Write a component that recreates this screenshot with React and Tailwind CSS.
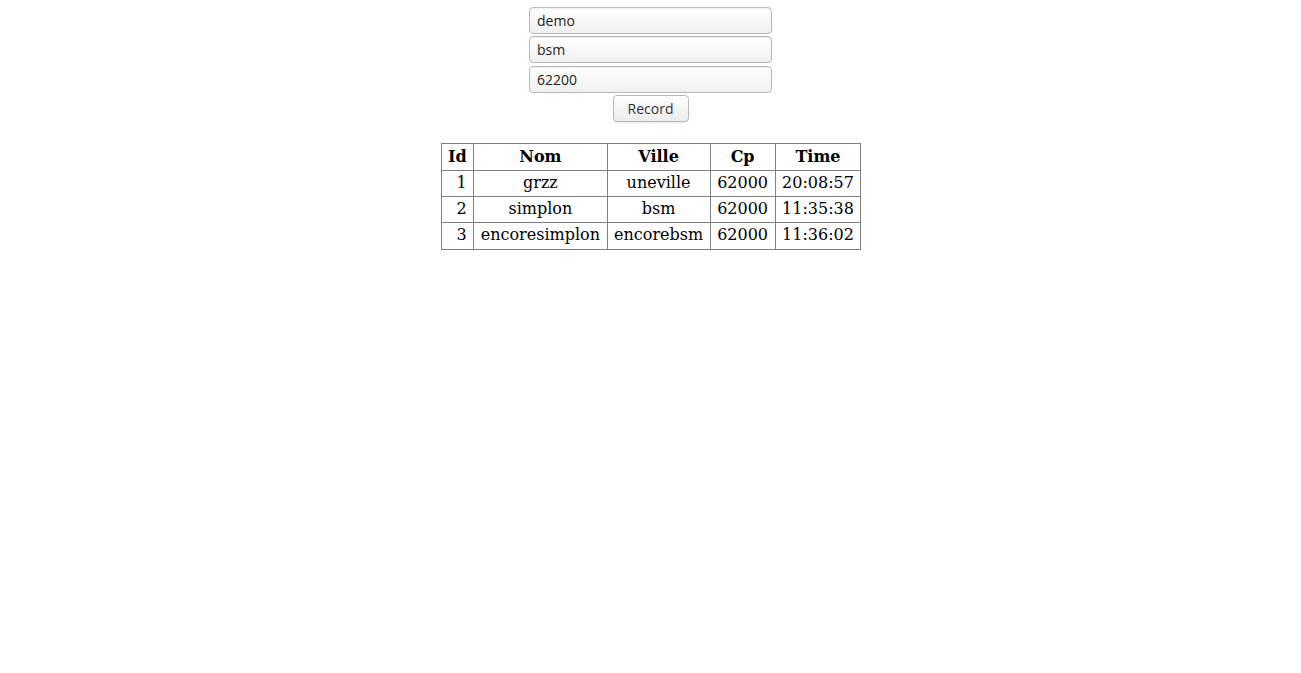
export default function App() {
  const rows = [
    [1, "grzz", "uneville", "62000", "20:08:57"],
    [2, "simplon", "bsm", "62000", "11:35:38"],
    [3, "encoresimplon", "encorebsm", "62000", "11:36:02"],
  ];
  const inputCls =
    "block w-[243px] h-[27px] rounded-[4px] border border-[#b8b8b8] bg-gradient-to-b from-[#ffffff] to-[#f0f0f0] px-[7px] text-[14px] text-[#222] shadow-[inset_0_1px_1px_rgba(0,0,0,0.06)] outline-none";
  const th = "border border-[#808080] px-[6.5px] pt-[3px] pb-[4px] font-bold";
  const td = "border border-[#808080] px-[6.5px] pt-[2px]";
  return (
    <div className="w-[1301px] h-[673px] bg-white flex flex-col items-center">
      <div className="flex flex-col items-center mt-[7px] font-['Open_Sans',sans-serif]">
        <input className={inputCls} defaultValue="demo" />
        <input className={inputCls + " mt-[2px]"} defaultValue="bsm" />
        <input className={inputCls + " mt-[3px]"} defaultValue="62200" />
        <button className="mt-[2px] w-[76px] h-[27px] rounded-[4px] border border-[#b8b8b8] bg-gradient-to-b from-[#ffffff] to-[#ececec] text-[14px] text-[#333] shadow-[0_1px_1px_rgba(0,0,0,0.08)]">
          Record
        </button>
      </div>
      <table className="mt-[21px] ml-[1px] border-collapse border border-[#808080] font-['DejaVu_Serif',serif] text-[16px] leading-[19px] text-black">
        <thead>
          <tr>
            <th className={th}>Id</th>
            <th className={th}>Nom</th>
            <th className={th}>Ville</th>
            <th className={th}>Cp</th>
            <th className={th}>Time</th>
          </tr>
        </thead>
        <tbody>
          {rows.map((r, i) => {
            const c = td + (i === 2 ? " pb-[5px]" : " pb-[4px]");
            return (
              <tr key={r[0]}>
                <td className={c + " text-right"}>{r[0]}</td>
                <td className={c + " text-center"}>{r[1]}</td>
                <td className={c + " text-center"}>{r[2]}</td>
                <td className={c + " text-center"}>{r[3]}</td>
                <td className={c + " text-center"}>{r[4]}</td>
              </tr>
            );
          })}
        </tbody>
      </table>
    </div>
  );
}
